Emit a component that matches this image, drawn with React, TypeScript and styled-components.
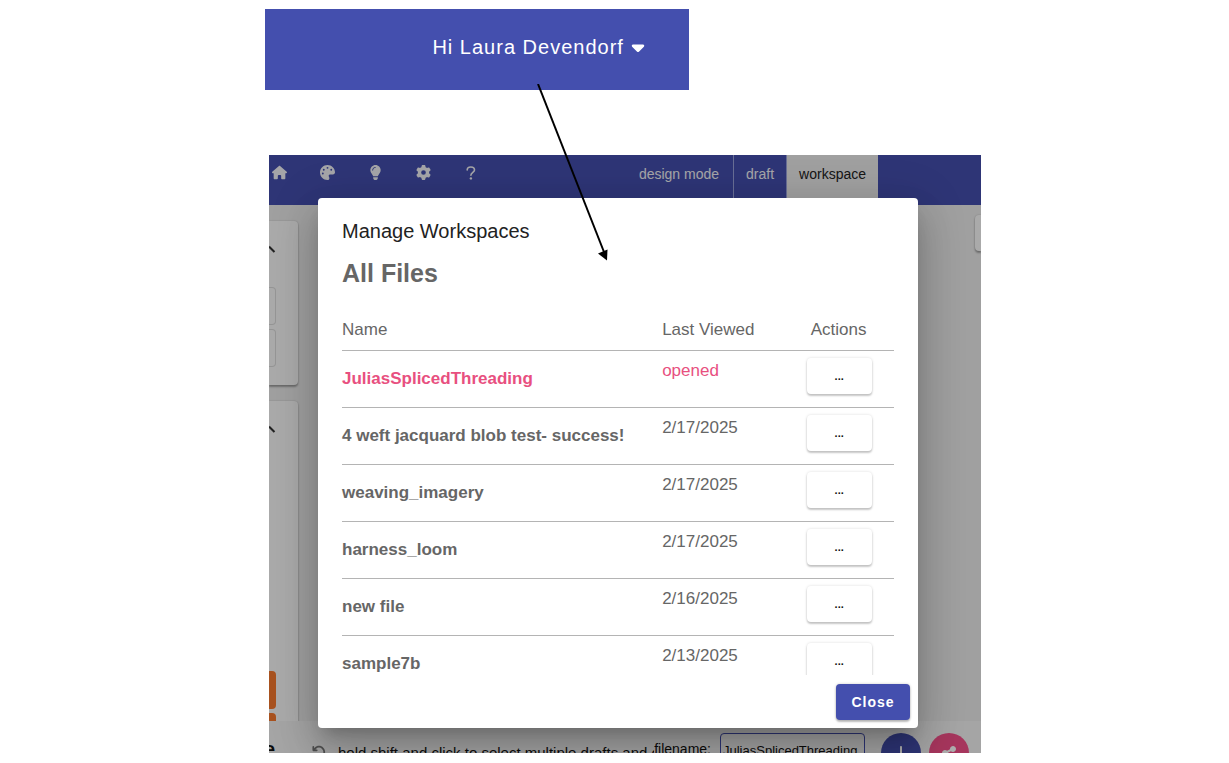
import React from "react";
import styled, { createGlobalStyle, css } from "styled-components";
import {
  FaHouse,
  FaPalette,
  FaLightbulb,
  FaGear,
  FaCaretDown,
  FaArrowRotateLeft,
  FaArrowDown,
  FaShareNodes,
} from "react-icons/fa6";

const indigo = "#444fae";
const pink = "#e8507f";
const grey = "#666666";

const GlobalStyle = createGlobalStyle`
  * { box-sizing: border-box; }
  body {
    margin: 0;
    background: #ffffff;
    font-family: "Liberation Sans", Arial, sans-serif;
  }
  button, input { font-family: inherit; }
`;

const Page = styled.main`
  display: grid;
  grid-template-columns: 265fr 716fr 248fr;
  padding: 9px 0 10px;
`;

const Figure = styled.div`
  grid-column: 2;
  position: relative;
  display: flex;
  flex-direction: column;
  gap: 65px;
  min-width: 0;
`;

const Banner = styled.header`
  display: flex;
  justify-content: flex-end;
  align-items: center;
  width: 59.2%;
  height: 81px;
  padding: 0 41px 5px 0;
  background: ${indigo};
`;

const UserMenu = styled.button`
  display: flex;
  align-items: center;
  gap: 4px;
  padding: 0;
  border: 0;
  background: none;
  color: #ffffff;
  font-size: 20px;
  line-height: 24px;
  letter-spacing: 1px;
  white-space: nowrap;
`;

const Pointer = styled.svg`
  position: absolute;
  left: 272px;
  top: 75px;
  z-index: 3;
  pointer-events: none;
`;

const Frame = styled.section`
  position: relative;
  margin-left: 4px;
  overflow: hidden;
  background: #ececec;
`;

const TopBar = styled.nav`
  display: flex;
  justify-content: space-between;
  height: 50px;
  padding-right: 103px;
  background: ${indigo};
  color: #f4f4f8;
`;

const ToolGroup = styled.div`
  display: flex;
  height: 35px;
`;

const Tool = styled.button`
  display: grid;
  place-items: center;
  width: 48px;
  padding: 0;
  border: 0;
  background: none;
  color: inherit;
  font-size: 15px;

  &:first-child { width: 20px; margin-right: 14px; }
`;

const ModeGroup = styled.div`
  display: flex;
  height: 43px;
  font-size: 14px;
  line-height: 38px;
`;

const ModeLabel = styled.span`
  padding-right: 14px;
`;

const Mode = styled.button<{ $active?: boolean }>`
  padding: 0 12px 5px;
  border: 0;
  border-left: 1px solid #9aa2dc;
  background: ${(p) => (p.$active ? "#ececec" : "transparent")};
  color: ${(p) => (p.$active ? "#222222" : "inherit")};
  font-size: 14px;
`;

const Workspace = styled.div`
  display: flex;
  justify-content: space-between;
  height: 516px;
  overflow: hidden;
`;

const Sidebar = styled.aside`
  display: flex;
  flex-direction: column;
  gap: 16px;
  width: 29px;
  padding-top: 16px;
`;

const card = css`
  background: #fbfbfb;
  box-shadow: 0 2px 2px rgba(0, 0, 0, 0.3), 0 0 2px rgba(0, 0, 0, 0.2);
`;

const Panel = styled.section<{ $grow?: boolean }>`
  ${card}
  display: flex;
  flex-direction: column;
  gap: 4px;
  height: ${(p) => (p.$grow ? "auto" : "164px")};
  flex: ${(p) => (p.$grow ? "1" : "none")};
  border-radius: ${(p) => (p.$grow ? "0 4px 0 0" : "0 4px 4px 0")};
  padding-top: 24px;
  overflow: hidden;
`;

const Chevron = styled.svg`
  display: block;
  flex: none;
  margin-bottom: 30px;
`;

const FieldEdge = styled.div`
  flex: none;
  width: 7px;
  height: 38px;
  border: 1px solid #dcdcdc;
  border-left: 0;
  border-radius: 0 4px 4px 0;
`;

const SwatchStack = styled.div`
  display: flex;
  flex-direction: column;
  gap: 4px;
  margin-top: auto;
  height: 50px;
  overflow: hidden;
`;

const Swatch = styled.div`
  flex: none;
  width: 7px;
  height: 38px;
  border-radius: 0 4px 4px 0;
  background: #f8792e;
`;

const SideTab = styled.div`
  ${card}
  width: 6px;
  height: 36px;
  margin-top: 10px;
  border-radius: 4px 0 0 4px;
`;

const StatusBar = styled.footer`
  display: flex;
  height: 32px;
  padding-right: 12px;
  background: #f4f4f4;
  color: #111111;
  font-size: 15px;
  line-height: 20px;
  white-space: nowrap;
  overflow: hidden;
`;

const CutWord = styled.strong`
  display: flex;
  justify-content: flex-end;
  width: 6px;
  padding-top: 16px;
  font-size: 20px;
  line-height: 24px;
`;

const Undo = styled.button`
  align-self: flex-start;
  margin: 24px 12px 0 37px;
  padding: 0;
  border: 0;
  background: none;
  color: #777777;
  font-size: 14px;
  line-height: 14px;
`;

const Hint = styled.span`
  flex: 1;
  min-width: 0;
  padding-top: 22px;
  overflow: hidden;
`;

const FileLabel = styled.label`
  padding: 18px 9px 0 0;
  font-size: 14px;
`;

const FileInput = styled.input`
  width: 145px;
  height: 34px;
  margin: 12px 16px 0 0;
  padding: 0 2px;
  border: 1px solid ${indigo};
  border-radius: 4px;
  background: transparent;
  color: #111111;
  font-size: 13px;
  flex: none;
`;

const RoundButton = styled.button<{ $color: string }>`
  display: grid;
  place-items: center;
  flex: none;
  width: 40px;
  height: 40px;
  margin-top: 12px;
  padding: 0;
  border: 0;
  border-radius: 50%;
  background: ${(p) => p.$color};
  color: #ffffff;
  font-size: 16px;

  & + & { margin-left: 8px; }
`;

const Scrim = styled.div`
  position: absolute;
  inset: 0;
  padding: 43px 63px 25px 49px;
  background: rgba(0, 0, 0, 0.32);
`;

const Dialog = styled.div`
  display: flex;
  flex-direction: column;
  height: 100%;
  border-radius: 4px;
  background: #ffffff;
  box-shadow: 0 11px 15px -7px rgba(0, 0, 0, 0.2), 0 24px 38px 3px rgba(0, 0, 0, 0.14),
    0 9px 46px 8px rgba(0, 0, 0, 0.12);
`;

const DialogTitle = styled.h1`
  margin: 0;
  padding: 20px 24px 0;
  color: #222222;
  font-size: 20px;
  font-weight: 400;
  line-height: 26px;
`;

const DialogBody = styled.div`
  flex: 1;
  min-height: 0;
  margin-top: 11px;
  padding: 0 24px;
  overflow: hidden;
  color: ${grey};
`;

const SectionTitle = styled.h2`
  margin: 0 0 27px;
  font-size: 25px;
  line-height: 36px;
`;

const Files = styled.table`
  width: 100%;
  border-collapse: collapse;
  table-layout: fixed;
  font-size: 17px;
  line-height: 24px;
  text-align: left;

  th, td { padding: 0; }
  thead th { height: 32px; font-weight: 400; vertical-align: top; }
  thead th:last-child { padding-left: 5px; }
  tr { border-bottom: 1px solid #b4b4b4; }
`;

const NameColumn = styled.col`
  width: 58%;
`;

const DateColumn = styled.col`
  width: 26%;
`;

const FileRow = styled.tr<{ $open?: boolean }>`
  height: 57px;
  color: ${(p) => (p.$open ? pink : "inherit")};

  th { font-weight: 700; white-space: nowrap; }
  td { vertical-align: top; }
`;

const DateCell = styled.td`
  && { padding-top: 8px; }
`;

const ActionCell = styled.td`
  && { padding: 7px 0 0 1px; }
`;

const MoreButton = styled.button`
  display: block;
  width: 65px;
  height: 36px;
  padding: 0;
  border: 0;
  border-radius: 4px;
  background: #ffffff;
  box-shadow: 0 2px 2px rgba(0, 0, 0, 0.2), 0 0 3px rgba(0, 0, 0, 0.14);
  color: #111111;
  font-size: 11px;
  font-weight: 700;
`;

const DialogActions = styled.div`
  display: flex;
  justify-content: flex-end;
  padding: 9px 8px 8px;
`;

const CloseButton = styled.button`
  width: 74px;
  height: 36px;
  padding: 0;
  border: 0;
  border-radius: 4px;
  background: ${indigo};
  box-shadow: 0 2px 2px rgba(0, 0, 0, 0.24), 0 0 3px rgba(0, 0, 0, 0.2);
  color: #ffffff;
  font-size: 14px;
  font-weight: 700;
  letter-spacing: 1px;
`;

const files = [
  { name: "JuliasSplicedThreading", viewed: "opened", open: true },
  { name: "4 weft jacquard blob test- success!", viewed: "2/17/2025" },
  { name: "weaving_imagery", viewed: "2/17/2025" },
  { name: "harness_loom", viewed: "2/17/2025" },
  { name: "new file", viewed: "2/16/2025" },
  { name: "sample7b", viewed: "2/13/2025" },
];

const PanelChevron = () => (
  <Chevron width="8" height="8" viewBox="0 0 8 8" aria-hidden="true">
    <path d="M0 1.5L5.5 7" stroke="#333333" strokeWidth="2" fill="none" />
  </Chevron>
);

const HelpIcon = () => (
  <svg width="10" height="14" viewBox="0 0 10 14" aria-hidden="true">
    <path
      d="M1.2 4C1.2 2.100 2.800 1 4.800 1C7 1 8.500 2.200 8.500 4C8.500 6.200 4.900 6.500 4.900 9.200"
      fill="none"
      stroke="currentColor"
      strokeWidth="1.600"
      strokeLinecap="round"
    />
    <circle cx="4.900" cy="12.400" r="1.200" fill="currentColor" />
  </svg>
);

export default function App() {
  return (
    <>
      <GlobalStyle />
      <Page>
        <Figure>
          <Banner>
            <UserMenu type="button">
              Hi Laura Devendorf
              <FaCaretDown />
            </UserMenu>
          </Banner>

          <Pointer width="80" height="180" viewBox="0 0 80 180" aria-hidden="true">
            <path d="M1 0L67 168" stroke="#000000" strokeWidth="2" />
            <path d="M70 176.500L61 169.500L70.500 165.500Z" fill="#000000" />
          </Pointer>

          <Frame>
            <TopBar>
              <ToolGroup>
                <Tool type="button" aria-label="Home"><FaHouse /></Tool>
                <Tool type="button" aria-label="Palette"><FaPalette /></Tool>
                <Tool type="button" aria-label="Ideas"><FaLightbulb /></Tool>
                <Tool type="button" aria-label="Settings"><FaGear /></Tool>
                <Tool type="button" aria-label="Help"><HelpIcon /></Tool>
              </ToolGroup>
              <ModeGroup>
                <ModeLabel>design mode</ModeLabel>
                <Mode type="button">draft</Mode>
                <Mode type="button" $active>workspace</Mode>
              </ModeGroup>
            </TopBar>

            <Workspace>
              <Sidebar>
                <Panel>
                  <PanelChevron />
                  <FieldEdge />
                  <FieldEdge />
                </Panel>
                <Panel $grow>
                  <PanelChevron />
                  <SwatchStack>
                    <Swatch />
                    <Swatch />
                  </SwatchStack>
                </Panel>
              </Sidebar>
              <SideTab />
            </Workspace>

            <StatusBar>
              <CutWord>e</CutWord>
              <Undo type="button" aria-label="Undo"><FaArrowRotateLeft /></Undo>
              <Hint>hold shift and click to select multiple drafts and o</Hint>
              <FileLabel htmlFor="filename">filename:</FileLabel>
              <FileInput id="filename" defaultValue="JuliasSplicedThreading" />
              <RoundButton type="button" aria-label="Download" $color={indigo}>
                <FaArrowDown />
              </RoundButton>
              <RoundButton type="button" aria-label="Share" $color="#f5508a">
                <FaShareNodes />
              </RoundButton>
            </StatusBar>

            <Scrim>
              <Dialog role="dialog" aria-labelledby="dialog-title">
                <DialogTitle id="dialog-title">Manage Workspaces</DialogTitle>
                <DialogBody>
                  <SectionTitle>All Files</SectionTitle>
                  <Files>
                    <colgroup>
                      <NameColumn />
                      <DateColumn />
                      <col />
                    </colgroup>
                    <thead>
                      <tr>
                        <th scope="col">Name</th>
                        <th scope="col">Last Viewed</th>
                        <th scope="col">Actions</th>
                      </tr>
                    </thead>
                    <tbody>
                      {files.map((file) => (
                        <FileRow key={file.name} $open={file.open}>
                          <th scope="row">{file.name}</th>
                          <DateCell>{file.viewed}</DateCell>
                          <ActionCell>
                            <MoreButton type="button" aria-label={`Actions for ${file.name}`}>
                              ...
                            </MoreButton>
                          </ActionCell>
                        </FileRow>
                      ))}
                    </tbody>
                  </Files>
                </DialogBody>
                <DialogActions>
                  <CloseButton type="button">Close</CloseButton>
                </DialogActions>
              </Dialog>
            </Scrim>
          </Frame>
        </Figure>
      </Page>
    </>
  );
}
